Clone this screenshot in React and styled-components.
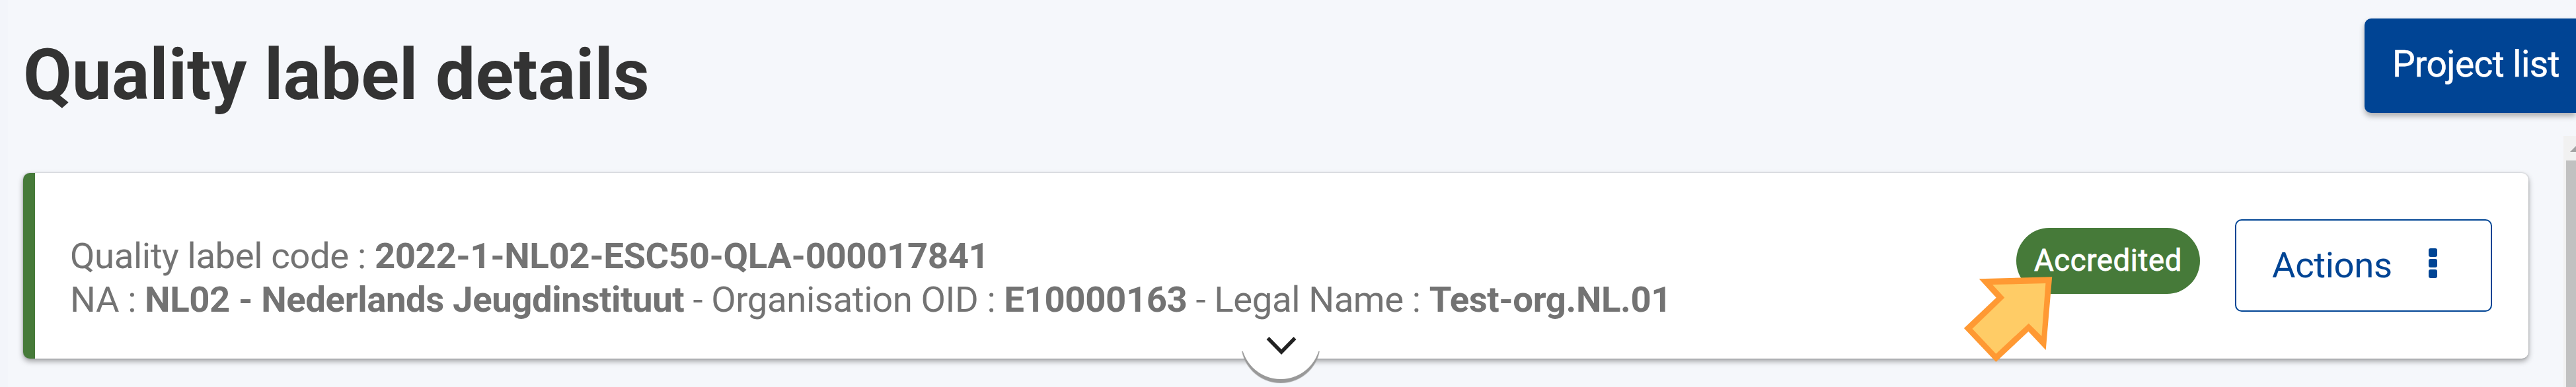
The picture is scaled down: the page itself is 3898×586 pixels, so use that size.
import styled, { createGlobalStyle } from "styled-components";

const GlobalStyle = createGlobalStyle`
  * {
    box-sizing: border-box;
  }

  body {
    margin: 0;
    overflow: hidden;
    background: #f5f7fb;
    font-family: Roboto, "Liberation Sans", sans-serif;
  }
`;

const Page = styled.div`
  height: 586px;
  padding-left: 35px;
  display: flex;
  flex-direction: column;
  overflow: hidden;
  box-shadow: inset 12px 0 0 #f3f5fa;
`;

const Header = styled.header`
  height: 206px;
  flex: none;
  display: flex;
  justify-content: space-between;
  align-items: flex-start;
`;

const Title = styled.h1`
  margin: 52px 0 0;
  font-size: 107px;
  line-height: 124px;
  letter-spacing: 0.1px;
  font-weight: 700;
  color: #333;
  white-space: nowrap;
`;

const ProjectButton = styled.button`
  width: 320px;
  height: 143px;
  margin-top: 28px;
  padding: 0 0 5px 42px;
  border: none;
  border-radius: 10px 0 0 10px;
  background: #004494;
  color: #fff;
  font: 400 55px Roboto, sans-serif;
  letter-spacing: -0.6px;
  text-align: left;
  white-space: nowrap;
  -webkit-text-stroke: 0.5px #fff;
  box-shadow: 0 5px 8px rgba(0, 0, 0, 0.3);
`;

const Body = styled.div`
  flex: 1;
  display: flex;
  justify-content: space-between;
`;

const Card = styled.section`
  position: relative;
  width: 3791px;
  height: 281px;
  margin-top: 56px;
  padding: 0 55px 0 53px;
  display: flex;
  align-items: flex-start;
  border-left: 18px solid #467a39;
  border-radius: 10px;
  background: #fff;
  box-shadow: 0 4px 8px rgba(0, 0, 0, 0.36), 0 0 3px rgba(0, 0, 0, 0.2);
`;

const Info = styled.div`
  flex: 1;
  margin-top: 92px;
  font-size: 54.5px;
  line-height: 66px;
  letter-spacing: -0.41px;
  color: #737373;
  white-space: nowrap;
`;

const Badge = styled.span`
  width: 278px;
  height: 100px;
  margin: 83px 53px 0 0;
  border-radius: 50px;
  background: #467a39;
  color: #fff;
  font-size: 45.5px;
  line-height: 99px;
  letter-spacing: 0.6px;
  text-align: center;
  -webkit-text-stroke: 0.8px #fff;
`;

const ActionsButton = styled.button`
  width: 389px;
  height: 140px;
  margin-top: 70px;
  padding: 0 81px 2px 54px;
  display: flex;
  align-items: center;
  justify-content: space-between;
  border: 2.5px solid #004494;
  border-radius: 10px;
  background: #fff;
  color: #004494;
  font: 400 54.5px Roboto, sans-serif;
  letter-spacing: -0.4px;
`;

const Dots = styled.span`
  display: flex;
  flex-direction: column;
  gap: 3px;
  margin-top: -6px;

  > i {
    width: 13px;
    height: 13px;
    border-radius: 3px;
    background: #004494;
  }
`;

const Expander = styled.div`
  position: absolute;
  left: 1825px;
  top: 192px;
  width: 120px;
  height: 120px;
  border-radius: 50%;
  background: #fff;
  box-shadow: 0 6px 1px #999;
  clip-path: inset(78px -10px -12px -10px);
`;

const Chevron = styled.svg`
  position: absolute;
  left: 1860px;
  top: 244px;
  width: 52px;
  height: 34px;
`;

const Pointer = styled.svg`
  position: absolute;
  left: 2917px;
  top: 156px;
  width: 136px;
  height: 132px;
`;

const Scrollbar = styled.div`
  width: 19px;
  padding-left: 4px;
  overflow: hidden;
  background: #f1f1f1;
`;

const ScrollArrow = styled.svg`
  display: block;
  width: 15px;
  height: 37px;
`;

const Thumb = styled.div`
  height: 343px;
  background: #c1c1c1;
`;

const App = () => {
  return (
    <>
      <GlobalStyle />
      <Page>
        <Header>
          <Title>Quality label details</Title>
          <ProjectButton>Project list</ProjectButton>
        </Header>
        <Body>
          <Card>
            <Info>
              <div>
                Quality label code : <b>2022-1-NL02-ESC50-QLA-000017841</b>
              </div>
              <div>
                NA : <b>NL02 - Nederlands Jeugdinstituut</b> - Organisation OID :{" "}
                <b>E10000163</b> - Legal Name : <b>Test-org.NL.01</b>
              </div>
            </Info>
            <Badge>Accredited</Badge>
            <ActionsButton>
              Actions
              <Dots>
                <i />
                <i />
                <i />
              </Dots>
            </ActionsButton>
            <Expander />
            <Chevron viewBox="0 0 52 34" fill="none">
              <path d="M5.5 6 L26 27 L46.5 6" stroke="#222" strokeWidth="5.5" />
            </Chevron>
            <Pointer viewBox="2970 418 136 132">
              <path
                d="M2994.7 422.3 L3105.2 419.3 L3095.7 530 L3069.4 502 L3020.3 548 L2971.9 497 L3020.7 450.7Z"
                fill="#ff9933"
              />
              <path
                d="M3015 431 L3095.4 429 L3089.4 509 L3069.8 489.7 L3020.3 535.7 L2984.5 497.7 L3033.3 450.7Z"
                fill="#ffcc66"
              />
            </Pointer>
          </Card>
          <Scrollbar>
            <ScrollArrow viewBox="0 0 15 37">
              <path d="M6 24 L17 13 L28 24Z" fill="#a3a3a3" />
            </ScrollArrow>
            <Thumb />
          </Scrollbar>
        </Body>
      </Page>
    </>
  );
};

export default App;
